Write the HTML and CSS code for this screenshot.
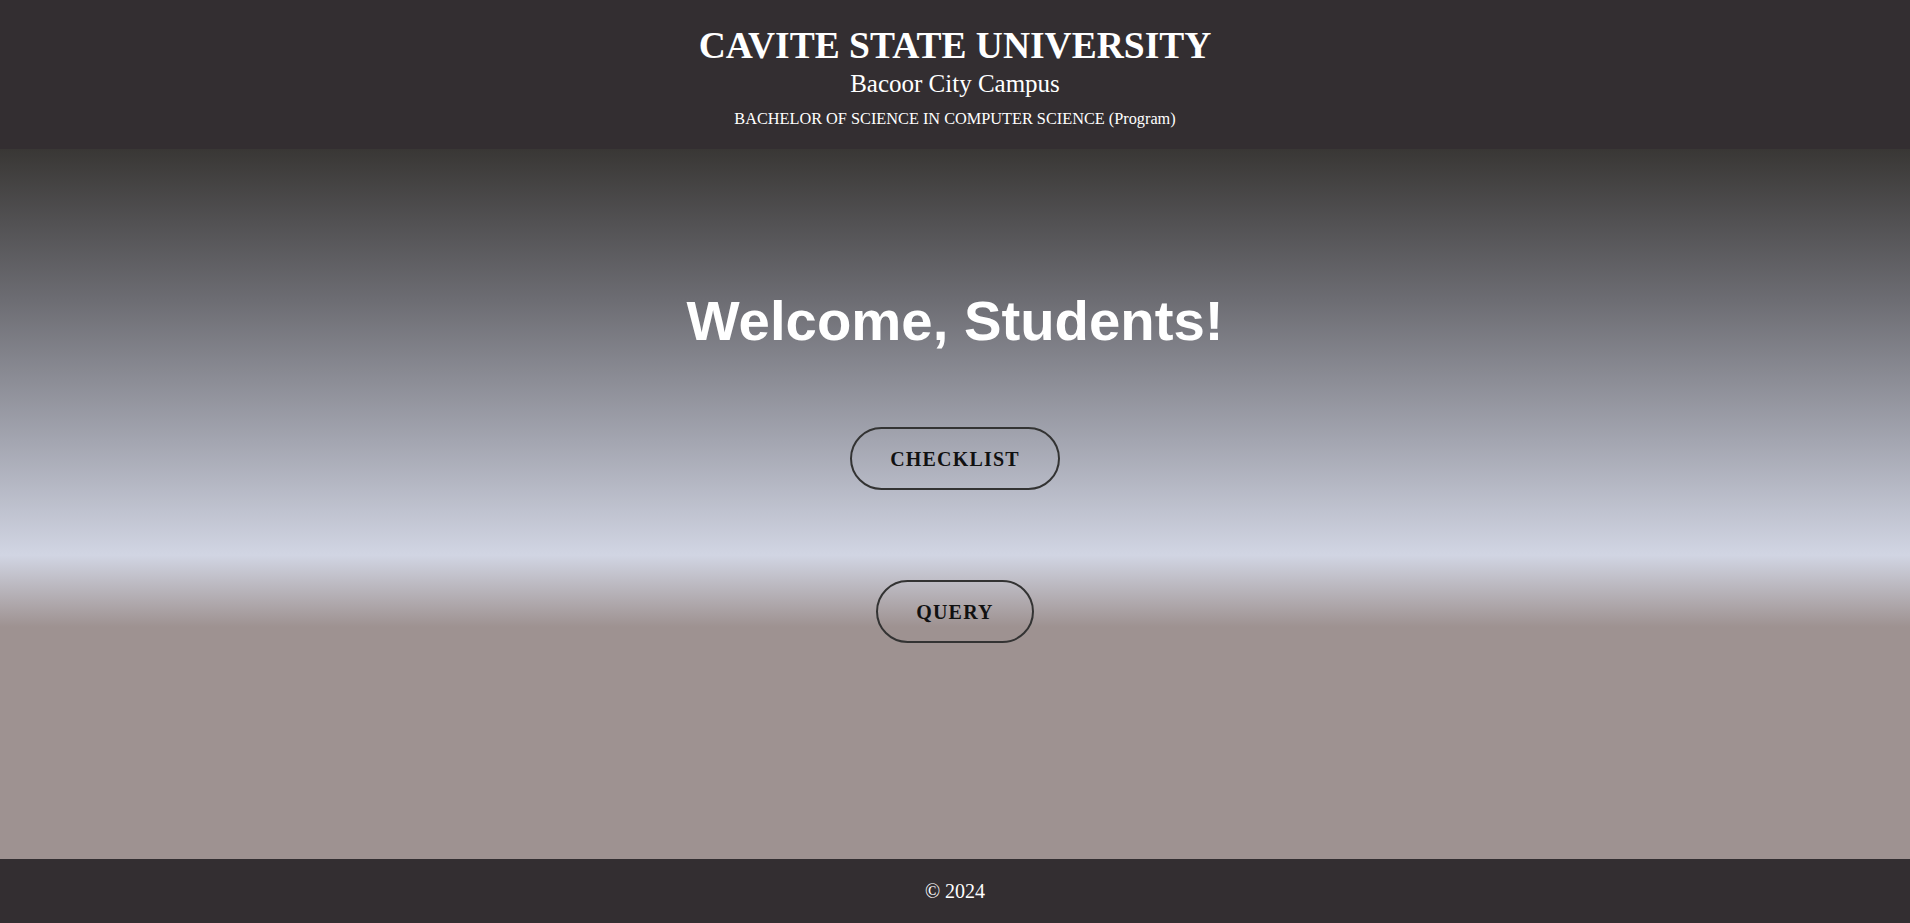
FILE: index.html
```html
<!DOCTYPE html>
<html lang="en">
<head>
<meta charset="utf-8">
<title>Cavite State University - Bacoor City Campus</title>
<link rel="stylesheet" href="styles.css">
</head>
<body>
<header class="site-header">
  <h1 class="uni-name">CAVITE STATE UNIVERSITY</h1>
  <h2 class="campus">Bacoor City Campus</h2>
  <p class="program">BACHELOR OF SCIENCE IN COMPUTER SCIENCE (Program)</p>
</header>
<main class="hero">
  <h2 class="welcome">Welcome, Students!</h2>
  <div class="actions">
    <a class="pill-btn" href="#">CHECKLIST</a>
    <a class="pill-btn" href="#">QUERY</a>
  </div>
</main>
<footer class="site-footer">
  <p class="copy">&copy; 2024</p>
</footer>
</body>
</html>
```

FILE: styles.css
```css
* { box-sizing: border-box; }

html, body { height: 100%; }

body {
  margin: 0;
  min-height: 100vh;
  display: flex;
  flex-direction: column;
  font-family: "Liberation Serif", "Times New Roman", serif;
  color: #fff;
  background: #9e9291;
}

.site-header {
  height: 149px;
  flex: 0 0 149px;
  background: #332e31;
  display: flex;
  flex-direction: column;
  align-items: center;
  padding-top: 27px;
}

.uni-name {
  margin: 0;
  font-size: 37.5px;
  line-height: 1;
  font-weight: bold;
}

.campus {
  margin: 6px 0 0;
  font-size: 25px;
  line-height: 1;
  font-weight: normal;
}

.program {
  margin: 15px 0 0;
  font-size: 16.3px;
  line-height: 1;
}

.hero {
  flex: 1 1 auto;
  display: flex;
  flex-direction: column;
  align-items: center;
  padding-top: 144px;
  background: linear-gradient(180deg, #393735 0%, #6c6c72 21%, #a3a5b0 41%, #d1d5e3 57.2%, #9e9291 67.3%, #9e9291 100%);
}

.welcome {
  margin: 0;
  font-family: "Liberation Sans", Arial, sans-serif;
  font-size: 56.3px;
  line-height: 1;
  font-weight: bold;
  color: #fff;
}

.actions {
  margin-top: 78px;
  display: flex;
  flex-direction: column;
  align-items: center;
  gap: 90px;
}

.pill-btn {
  display: block;
  padding: 19.5px 38.5px;
  border: 2px solid #333;
  border-radius: 40px;
  font-family: "Liberation Serif", "Times New Roman", serif;
  font-size: 20px;
  line-height: 20px;
  font-weight: bold;
  letter-spacing: 1.2px;
  color: #111;
  text-decoration: none;
  background: transparent;
}

.site-footer {
  flex: 0 0 64px;
  height: 64px;
  background: #332e31;
  display: flex;
  align-items: center;
  justify-content: center;
}

.copy {
  margin: 0;
  font-size: 20px;
  line-height: 1;
  color: #fff;
}
```
